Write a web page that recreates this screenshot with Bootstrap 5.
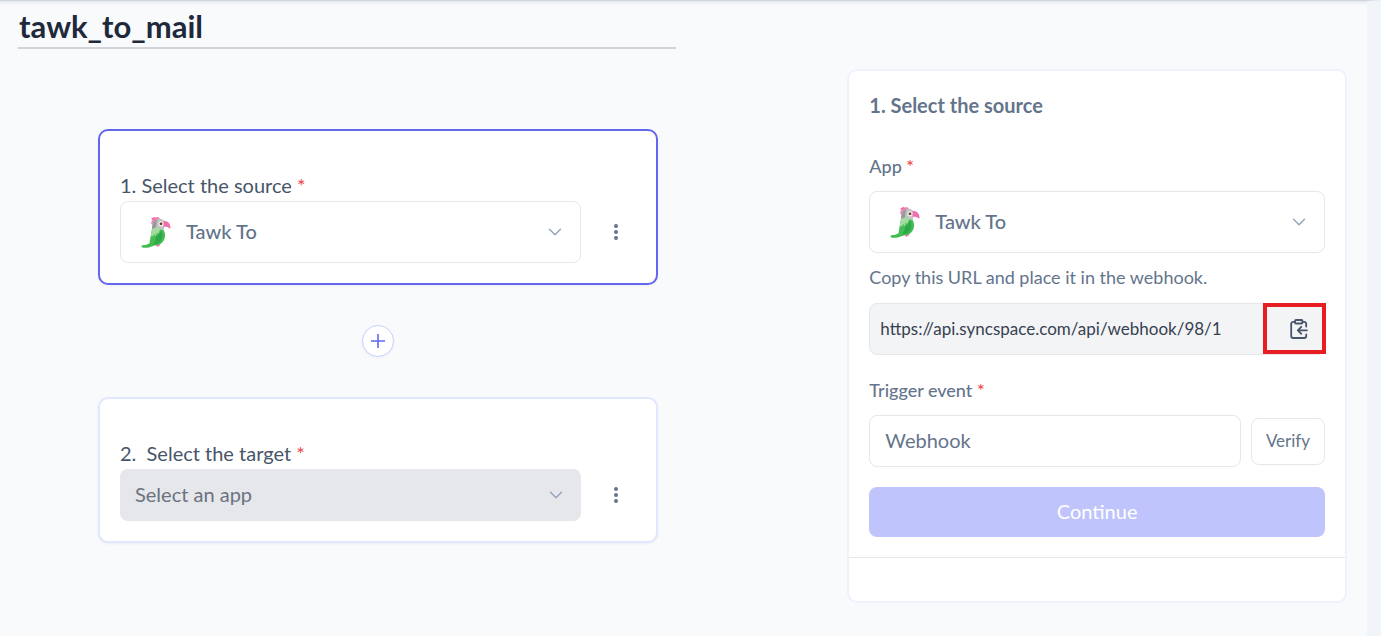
<!DOCTYPE html>
<html lang="en">
<head>
<meta charset="utf-8">
<meta name="viewport" content="width=device-width, initial-scale=1">
<title>tawk_to_mail</title>
<link href="https://cdn.jsdelivr.net/npm/bootstrap@5.3.0/dist/css/bootstrap.min.css" rel="stylesheet">
<style>
  body { font-family: Lato, "Liberation Sans", sans-serif; font-size: 20px; line-height: 30px; color: #64748b; background: #f8fafc; }
  .page-shell { min-height: 100vh; border-top: 1px solid #cfd6e0; border-right: 14px solid #f1f5f9; background: linear-gradient(#e6eaf0, #f8fafc 4px); padding: 5px 20px 24px 18px; }
  .flow-col { width: 658px; flex: 0 1 49.5%; }
  .panel-col { flex: 0 1 37.6%; margin-top: 63px; }
  .flow-title { height: 43px; padding: 0 1px 2px; border: 0; border-bottom: 2px solid #d1d5db; border-radius: 0; background: transparent; font-size: 31px; line-height: 38px; font-weight: 700; color: #1e293b; }
  .steps { padding: 80px 18px 0 80px; }
  .step-card { background: #fff; border: 2px solid #e0e7ff; border-radius: 10px; padding: 40px 20px 20px; box-shadow: 0 1px 3px #0000000d; }
  .step-card.is-active { border-color: #6366f1; }
  .step-label { color: #475569; font-size: 20px; line-height: 28px; margin-bottom: 2px; white-space: pre; }
  .req { color: #ef4444; }
  .app-box { border: 1px solid #e5e7eb; border-radius: 8px; background: #fff; height: 62px; padding-left: 20px; }
  .app-box .form-select, .empty-select { border: 0; height: 50px; font-size: 20px; line-height: 30px; color: #64748b; background-color: transparent; background-size: 14px 14px; background-position: right 18px center; --bs-form-select-bg-img: url("data:image/svg+xml,%3Csvg xmlns='http://www.w3.org/2000/svg' viewBox='0 0 14 14'%3E%3Cpath d='M1.5 4.2 7 9.7l5.500-5.500' fill='none' stroke='%2394a3b8' stroke-width='1.4' stroke-linecap='round' stroke-linejoin='round'/%3E%3C/svg%3E"); }
  .app-box .form-select { font-weight: 500; padding: 0 36px 2px 15px; }
  .form-select.empty-select { height: 52px; background-color: #e5e7eb; border-radius: 8px; padding: 0 36px 2px 15px; color: #6b7280; opacity: 1; }
  .dots-btn { width: 40px; height: 40px; margin-left: 15px; color: #64748b; }
  .add-btn { width: 32px; height: 32px; border: 1px solid #c7d2fe; background: #fff; margin: 40px 0; box-shadow: 0 1px 3px #0000000d; }
  .side-panel { border: 2px solid #eef2ff; border-radius: 10px; background: #fff; }
  .side-body { padding: 20px; }
  .side-foot { height: 44px; border-top: 1px solid #e5e7eb; }
  .side-title { font-size: 20px; line-height: 28px; font-weight: 700; margin-bottom: 36px; }
  .side-label { font-size: 18px; line-height: 22px; font-weight: 500; margin-bottom: 14px; display: block; }
  .help-text { font-size: 18px; line-height: 22px; margin: 13px 0 15px; }
  .url-group { height: 52px; border: 1px solid #e5e7eb; border-radius: 8px; background: #f3f4f6; margin-bottom: 24px; }
  .url-group .form-control { border: 0; background: transparent; padding: 0 10px; font-size: 17px; color: #374151; }
  .copy-btn { width: 61px; height: 50px; padding: 0 14px 0 0; color: #475569; }
  .copy-btn::after { content: ""; position: absolute; inset: -2px -3px -1px -1px; border: 4px solid #e81c23; }
  .event-row { gap: 10px; margin-bottom: 20px; }
  .event-input { height: 52px; border-color: #e5e7eb; border-radius: 8px; padding: 0 15px 2px; font-size: 20px; color: #64748b; }
  .verify-btn { width: 74px; height: 47px; flex: none; border: 1px solid #e5e7eb; border-radius: 8px; padding: 0; font-size: 17px; color: #64748b; background: #fff; }
  .next-btn.btn { height: 50px; border: 0; border-radius: 8px; padding: 0 0 2px; font-size: 20px; color: #fff; background: #c0c4fc; opacity: 1; }
</style>
</head>
<body>
<svg width="0" height="0" class="position-absolute" aria-hidden="true">
  <symbol id="parrot" viewBox="0 0 30 32">
    <path d="M12 4.500C10 3.500 10 1.800 11.500 2c.8-1.400 2.500-1.200 3.300-.2 1.200-.8 3-.6 4 .8l-2 3-5 3c-2-.4-2-2-1-2.400-1-.6 0-1.700 1.200-1.700z" fill="#f472b0"/>
    <path d="M11 14C10.500 8 12 3 17.500 2.500c4.500 0 7 3 6.500 7L22 15l-6 3z" fill="#c2c2c2"/>
    <path d="M11 14c0-6 2-10 5.500-11-1.500 4-1 7-2.500 12z" fill="#999"/>
    <path d="M22.500 5c4-.4 7 2.300 7 6.500 0 .8-.4 1.200-.8 1l-2.200-1.500-4-.5z" fill="#f06fae"/>
    <circle cx="20" cy="7.800" r="2.600" fill="#f5f0ed"/>
    <circle cx="20" cy="7.800" r="1.400" fill="#6b3a2a"/>
    <path d="M14.500 28l5-1.500-.6 2 .4 1.300-1.600-.3-.8 1.500-1.500-1z" fill="#f06fae"/>
    <path d="M10.500 15l5.500-2 6.500 1c3 5 1.500 11-3 14-2.500 1.300-5.500 1-7.500 2-3 1.400-6 2-9.500 1.800C.2 31.600-.2 29.500 1.500 29.200c3-.1 5-.8 7-2z" fill="#43bd52"/>
    <path d="M15 20c2 1 3-3 5-5 2.500 4 1.500 9-2.500 12-3 2-5.500 1.500-5.500 1.500 2-2 3-5 3-8.500z" fill="#2fa84a"/>
    <path d="M9.800 20l1-7 5.500-2 3 2-2 5-1.500-1.500-1 4-1.700-2.500-1 2.500z" fill="#a3dba0"/>
  </symbol>
  <symbol id="dots" viewBox="0 0 4 16">
    <circle cx="2" cy="2" r="2"/><circle cx="2" cy="8" r="2"/><circle cx="2" cy="14" r="2"/>
  </symbol>
</svg>

<main class="page-shell d-flex justify-content-between align-items-start">
  <section class="flow-col">
    <input class="form-control flow-title shadow-none" type="text" value="tawk_to_mail" aria-label="Flow name">
    <div class="steps d-flex flex-column align-items-center">
      <div class="step-card is-active w-100">
        <label class="step-label d-block" for="sourceApp">1. Select the source <span class="req">*</span></label>
        <div class="d-flex align-items-center">
          <div class="app-box d-flex align-items-center flex-grow-1">
            <svg width="30" height="32" class="flex-shrink-0" aria-hidden="true"><use href="#parrot"/></svg>
            <select class="form-select shadow-none" id="sourceApp"><option>Tawk To</option></select>
          </div>
          <button class="btn dots-btn p-0 d-flex flex-shrink-0 align-items-center justify-content-center" type="button" aria-label="Source options"><svg width="4" height="16" fill="currentColor"><use href="#dots"/></svg></button>
        </div>
      </div>
      <button class="btn add-btn rounded-circle p-0 d-flex align-items-center justify-content-center" type="button" aria-label="Add step">
        <svg width="14" height="14" viewBox="0 0 14 14" stroke="#6366f1" stroke-width="1.600"><path d="M7 0v14M0 7h14"/></svg>
      </button>
      <div class="step-card w-100">
        <label class="step-label d-block" for="targetApp">2.  Select the target <span class="req">*</span></label>
        <div class="d-flex align-items-center">
          <select class="form-select empty-select shadow-none" id="targetApp" disabled><option>Select an app</option></select>
          <button class="btn dots-btn p-0 d-flex flex-shrink-0 align-items-center justify-content-center" type="button" aria-label="Target options"><svg width="4" height="16" fill="currentColor"><use href="#dots"/></svg></button>
        </div>
      </div>
    </div>
  </section>

  <aside class="panel-col">
    <div class="side-panel">
      <form class="side-body">
        <h2 class="side-title">1. Select the source</h2>
        <label class="side-label" for="panelApp">App <span class="req">*</span></label>
        <div class="app-box d-flex align-items-center">
          <svg width="30" height="32" class="flex-shrink-0" aria-hidden="true"><use href="#parrot"/></svg>
          <select class="form-select shadow-none" id="panelApp"><option>Tawk To</option></select>
        </div>
        <label class="help-text d-block" for="hookUrl">Copy this URL and place it in the webhook.</label>
        <div class="url-group d-flex">
          <input class="form-control shadow-none" id="hookUrl" type="text" value="https://api.syncspace.com/api/webhook/98/1" readonly>
          <button class="btn copy-btn position-relative flex-shrink-0 d-flex align-items-center justify-content-end" type="button" aria-label="Copy URL">
            <svg width="20" height="20" viewBox="0 0 20 20" fill="none" stroke="currentColor" stroke-width="1.800" stroke-linecap="round" stroke-linejoin="round"><rect x="6" y="1" width="7.500" height="3.500" rx="1"/><path d="M6 2.800H4.200a2 2 0 0 0-2 2V17a2 2 0 0 0 2 2h11a2 2 0 0 0 2-2v-1.500M13.500 2.800h1.700a2 2 0 0 1 2 2V7.500M18 11.300H9M12.300 7.800 8.800 11.300l3.500 3.500"/></svg>
          </button>
        </div>
        <label class="side-label" for="eventName">Trigger event <span class="req">*</span></label>
        <div class="event-row d-flex align-items-center">
          <input class="form-control event-input shadow-none" id="eventName" type="text" value="Webhook">
          <button class="btn verify-btn" type="button">Verify</button>
        </div>
        <button class="btn next-btn w-100" type="submit" disabled>Continue</button>
      </form>
      <div class="side-foot"></div>
    </div>
  </aside>
</main>
<script src="https://cdn.jsdelivr.net/npm/bootstrap@5.3.0/dist/js/bootstrap.bundle.min.js"></script>
</body>
</html>
